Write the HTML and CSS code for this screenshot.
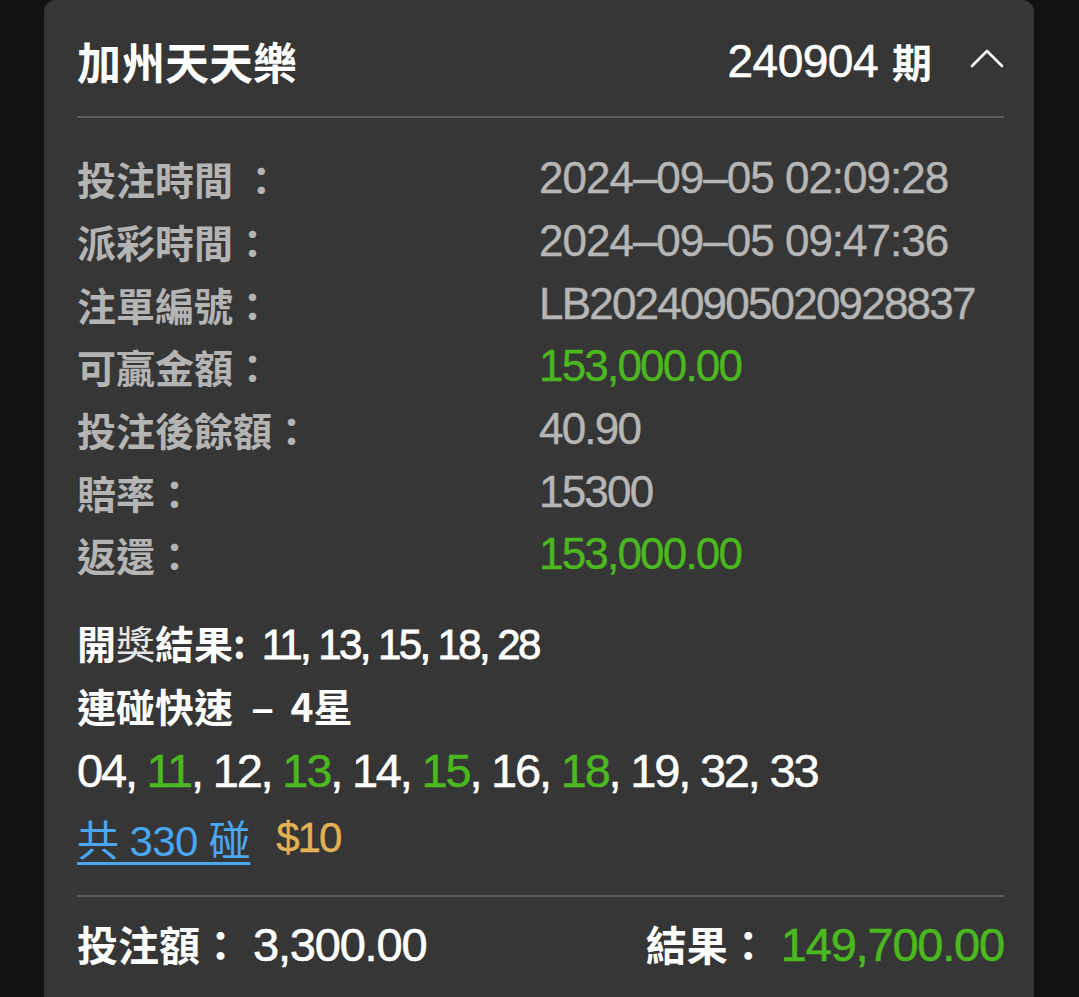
FILE: index.html
```html
<html>
  <head>
    <link rel="stylesheet" href="styles.css">
    <title>加州天天樂 注單</title>
  </head>
  <body>
    <div class="card">
      <div class="card-head">
        <div class="game">加州天天樂</div>
        <div class="issue">
          <span class="issue-no">240904</span> <span class="issue-unit">期</span>
          <svg class="chevron" width="34" height="22" viewBox="0 0 34 22">
            <polyline points="2,19 17,4 32,19" fill="none" stroke="#fff" stroke-width="2.6" stroke-linecap="round" stroke-linejoin="round"/>
          </svg>
        </div>
      </div>

      <div class="details">
        <div class="label">投注時間 ：</div>
        <div class="value date">2024–09–05 02:09:28</div>

        <div class="label">派彩時間：</div>
        <div class="value date">2024–09–05 09:47:36</div>

        <div class="label">注單編號：</div>
        <div class="value">LB20240905020928837</div>

        <div class="label">可贏金額：</div>
        <div class="value green">153,000.00</div>

        <div class="label">投注後餘額：</div>
        <div class="value">40.90</div>

        <div class="label">賠率：</div>
        <div class="value">15300</div>

        <div class="label">返還：</div>
        <div class="value green">153,000.00</div>
      </div>

      <div class="bet">
        <div class="draw">開<span class="thin">獎</span>結果:<span class="draw-nums">11, 13, 15, 18, 28</span></div>
        <div class="play">連碰快速 <span class="dash">–</span> 4星</div>
        <div class="picks">04, <span class="green">11</span>, 12, <span class="green">13</span>, 14, <span class="green">15</span>, 16, <span class="green">18</span>, 19, 32, 33</div>
        <div class="combos">
          <a class="combo-link">共 330 碰</a>
          <span class="stake">$10</span>
        </div>
      </div>

      <div class="card-foot">
        <div class="foot-item"><span class="foot-label">投注額：</span><span class="foot-value">3,300.00</span></div>
        <div class="foot-item"><span class="foot-label">結果：</span><span class="foot-value green">149,700.00</span></div>
      </div>
    </div>
  </body>
</html>
```

FILE: styles.css
```css
/* dark bet slip card */
body {
    margin: 0;
    padding: 0;
    background-color: #111214;
    font-family: "Liberation Sans", "Noto Sans CJK TC", sans-serif;
    color: #fff;
    height: 997px;
    overflow: hidden;
}

.card {
    margin: 0 45px 0 44px;
    padding: 0 30px 0 33px;
    background-color: #363636;
    border-radius: 12px 12px 0 0;
    height: 1100px;
}

/* Header */
.card-head {
    display: flex;
    justify-content: space-between;
    align-items: center;
    height: 118px;
    padding-top: 6px;
    box-sizing: border-box;
    border-bottom: 2px solid #5c5c5c;
}

.game {
    font-family: "Noto Sans CJK TC", sans-serif;
    font-weight: 700;
    font-size: 44px;
}

.issue {
    display: flex;
    align-items: center;
    font-size: 46px;
}

.issue-no {
    letter-spacing: -0.5px;
    -webkit-text-stroke: 0.6px #fff;
}

.issue-unit {
    font-family: "Noto Sans CJK TC", sans-serif;
    font-weight: 700;
    font-size: 40px;
    margin-left: 14px;
}

.chevron {
    margin-left: 38px;
    margin-top: -6px;
}

/* Detail rows */
.details {
    display: grid;
    grid-template-columns: 462px 1fr;
    grid-auto-rows: 62.7px;
    align-items: center;
    padding-top: 29px;
}

.label {
    font-family: "Noto Sans CJK TC", sans-serif;
    font-weight: 700;
    font-size: 39px;
    color: #b4b4b4;
}

.value {
    font-size: 44px;
    letter-spacing: -1.8px;
    color: #b6b6b6;
    -webkit-text-stroke: 0.4px #b6b6b6;
}

.value.green {
    -webkit-text-stroke: 0.4px #4bb81f;
}

.value.date {
    letter-spacing: -1px;
}

.green {
    color: #4bb81f !important;
}

/* Bet content */
.bet {
    padding-top: 25px;
    padding-bottom: 24px;
    border-bottom: 2px solid #5c5c5c;
}

.draw, .play {
    font-family: "Noto Sans CJK TC", sans-serif;
    font-weight: 700;
    font-size: 39px;
    height: 63px;
    line-height: 63px;
}

.thin {
    font-weight: 400;
    color: #e6e6e6;
}

.draw-nums {
    font-family: "Liberation Sans", sans-serif;
    font-size: 42px;
    letter-spacing: -2.6px;
    font-weight: 400;
    margin-left: 16px;
    -webkit-text-stroke: 0.8px #fff;
}

.dash {
    font-family: "Liberation Sans", sans-serif;
    margin: 0 8px 0 10px;
}

.picks {
    font-size: 47px;
    letter-spacing: -2.2px;
    height: 68px;
    line-height: 68px;
    -webkit-text-stroke: 0.5px currentColor;
}

.picks .green {
    -webkit-text-stroke: 0.5px #4bb81f;
}

.combos {
    display: flex;
    align-items: center;
    gap: 26px;
    height: 66px;
    font-size: 42px;
}

.combo-link {
    color: #4aa7f2;
    text-decoration: underline;
    text-decoration-thickness: 3px;
    text-underline-offset: 6px;
    letter-spacing: -0.6px;
}

.stake {
    color: #e0b254;
    letter-spacing: -2px;
    -webkit-text-stroke: 0.4px #e0b254;
}

/* Footer */
.card-foot {
    display: flex;
    justify-content: space-between;
    align-items: center;
    height: 92px;
}

.foot-label {
    font-family: "Noto Sans CJK TC", sans-serif;
    font-weight: 700;
    font-size: 41px;
}

.foot-value {
    font-size: 47px;
    letter-spacing: -1.2px;
    margin-left: 12px;
    -webkit-text-stroke: 0.6px #fff;
}

.foot-value.green {
    -webkit-text-stroke: 0.6px #4bb81f;
}
```
